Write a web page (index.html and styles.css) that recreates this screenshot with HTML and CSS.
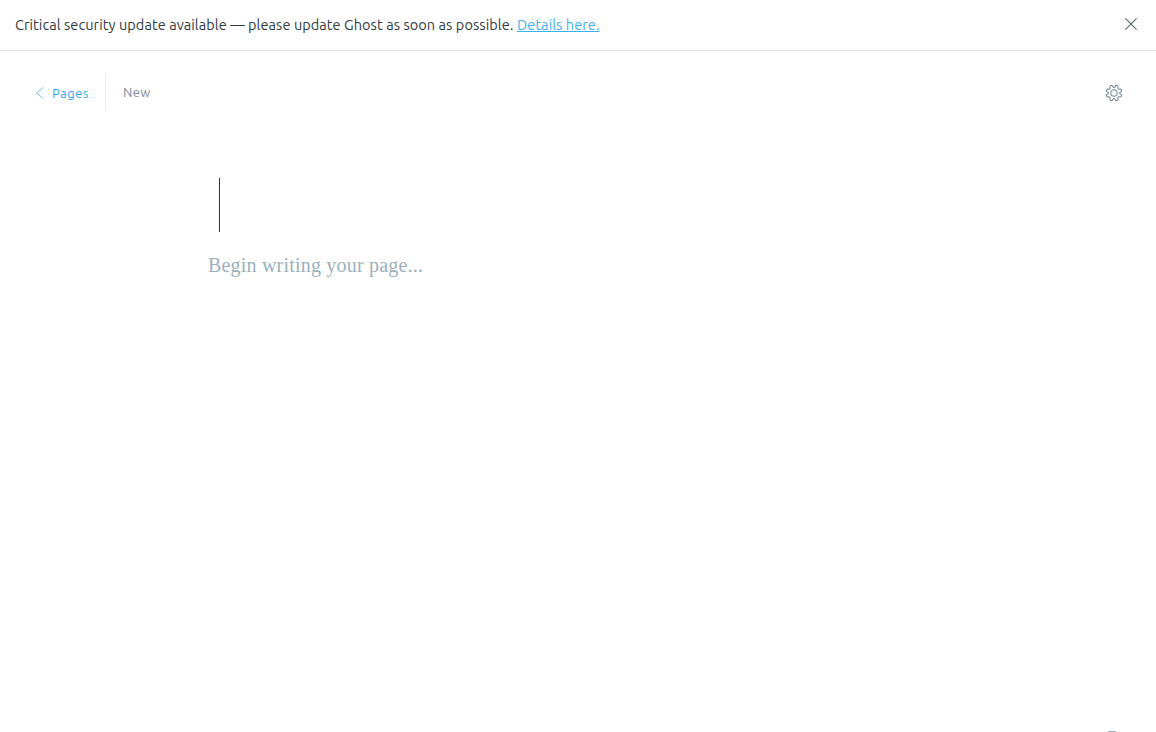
FILE: index.html
```html
<!DOCTYPE html>
<html lang="en">
<head>
<meta charset="utf-8">
<title>New page</title>
<link rel="stylesheet" href="styles.css">
</head>
<body>
<div class="app">
  <aside class="alert">
    <p class="alert-text"><span class="alert-message">Critical security update available — please update Ghost as soon as possible.</span><a class="alert-link" href="#">Details here.</a></p>
    <button class="alert-close" aria-label="Close">
      <svg width="12" height="12" viewBox="0 0 12 12"><path d="M.4.4l11.2 11.2M11.6.4L.4 11.6"/></svg>
    </button>
  </aside>
  <header class="header">
    <a class="back" href="#">
      <svg class="back-icon" width="8" height="12" viewBox="0 0 8 12"><path d="M7.4.3L.7 6l6.7 5.7"/></svg>
      <span>Pages</span>
    </a>
    <span class="status">New</span>
    <button class="settings" aria-label="Settings">
      <svg width="18" height="18" viewBox="-9.5 -9.5 19 19"><circle r="3.4"/><path d="M-1.73-7.7Q0-4.1 1.73-7.7A1.6 1.6 0 0 1 4.3-6.65Q3.2-3.2 6.65-4.3A1.6 1.6 0 0 1 7.7-1.73Q4.1 0 7.7 1.73A1.6 1.6 0 0 1 6.65 4.3Q3.2 3.2 4.3 6.65A1.6 1.6 0 0 1 1.73 7.7Q0 4.1-1.73 7.7A1.6 1.6 0 0 1-4.3 6.65Q-3.2 3.2-6.65 4.3A1.6 1.6 0 0 1-7.7 1.73Q-4.1 0-7.7-1.73A1.6 1.6 0 0 1-6.65-4.3Q-3.2-3.2-4.3-6.65A1.6 1.6 0 0 1-1.73-7.7z"/></svg>
    </button>
  </header>
  <main class="editor">
    <div class="title"></div>
    <p class="placeholder">Begin writing your page...</p>
  </main>
  <footer class="footer"><span class="help"></span></footer>
</div>
</body>
</html>
```
FILE: styles.css
```css
* { box-sizing: border-box; }
body {
  margin: 0;
  background: #fff;
  font-family: Ubuntu, "Noto Sans", sans-serif;
  overflow: hidden;
}
.app { display: flex; flex-direction: column; height: 732px; }
button { display: flex; margin: 0; padding: 0; border: 0; background: none; }
svg { display: block; fill: none; }
a { text-decoration: none; }
.alert {
  display: flex;
  justify-content: space-between;
  height: 51px;
  padding: 0 19px 0 15px;
  border-bottom: 1px solid #dfe1e3;
}
.alert-text {
  display: flex;
  gap: 4px;
  margin: 0;
  padding-top: 14px;
  font-size: 14.5px;
  line-height: 21px;
  color: #2f3a3f;
  white-space: nowrap;
}
.alert-message { width: 498px; letter-spacing: 0.067px; }
.alert-link {
  color: #3eb0ef;
  letter-spacing: 0.07px;
  text-decoration: underline;
}
.alert-close { padding-top: 18px; }
.alert-close svg { stroke: #54666d; stroke-width: 1.1; }
.header {
  display: flex;
  height: 85px;
  padding: 23px 33px 0 36px;
  font-size: 13px;
  line-height: 20px;
  letter-spacing: .45px;
}
.back {
  display: flex;
  gap: 8px;
  width: 70px;
  height: 36px;
  padding-top: 9px;
  border-right: 1px solid #e3ecf2;
  color: #2fa8ec;
}
.back-icon { margin-top: 4px; stroke: #5bbcf2; stroke-width: .9; }
.status { padding: 8px 0 0 17px; color: #788c99; }
.settings { margin: 10px 0 0 auto; height: 18px; }
.settings svg { stroke: #6c838f; stroke-width: 1.1; }
.editor { flex: 1; padding: 42px 208px 0; }
.title { width: 1px; height: 54px; margin-left: 11px; background: #2b3033; }
.placeholder {
  margin: 18px 0 0;
  font: 20px/30px "Liberation Serif", serif;
  letter-spacing: .2px;
  color: #9bb0bc;
}
.footer { display: flex; justify-content: flex-end; padding-right: 40px; }
.help { width: 8px; height: 1px; background: #a5b4bc; }
```
